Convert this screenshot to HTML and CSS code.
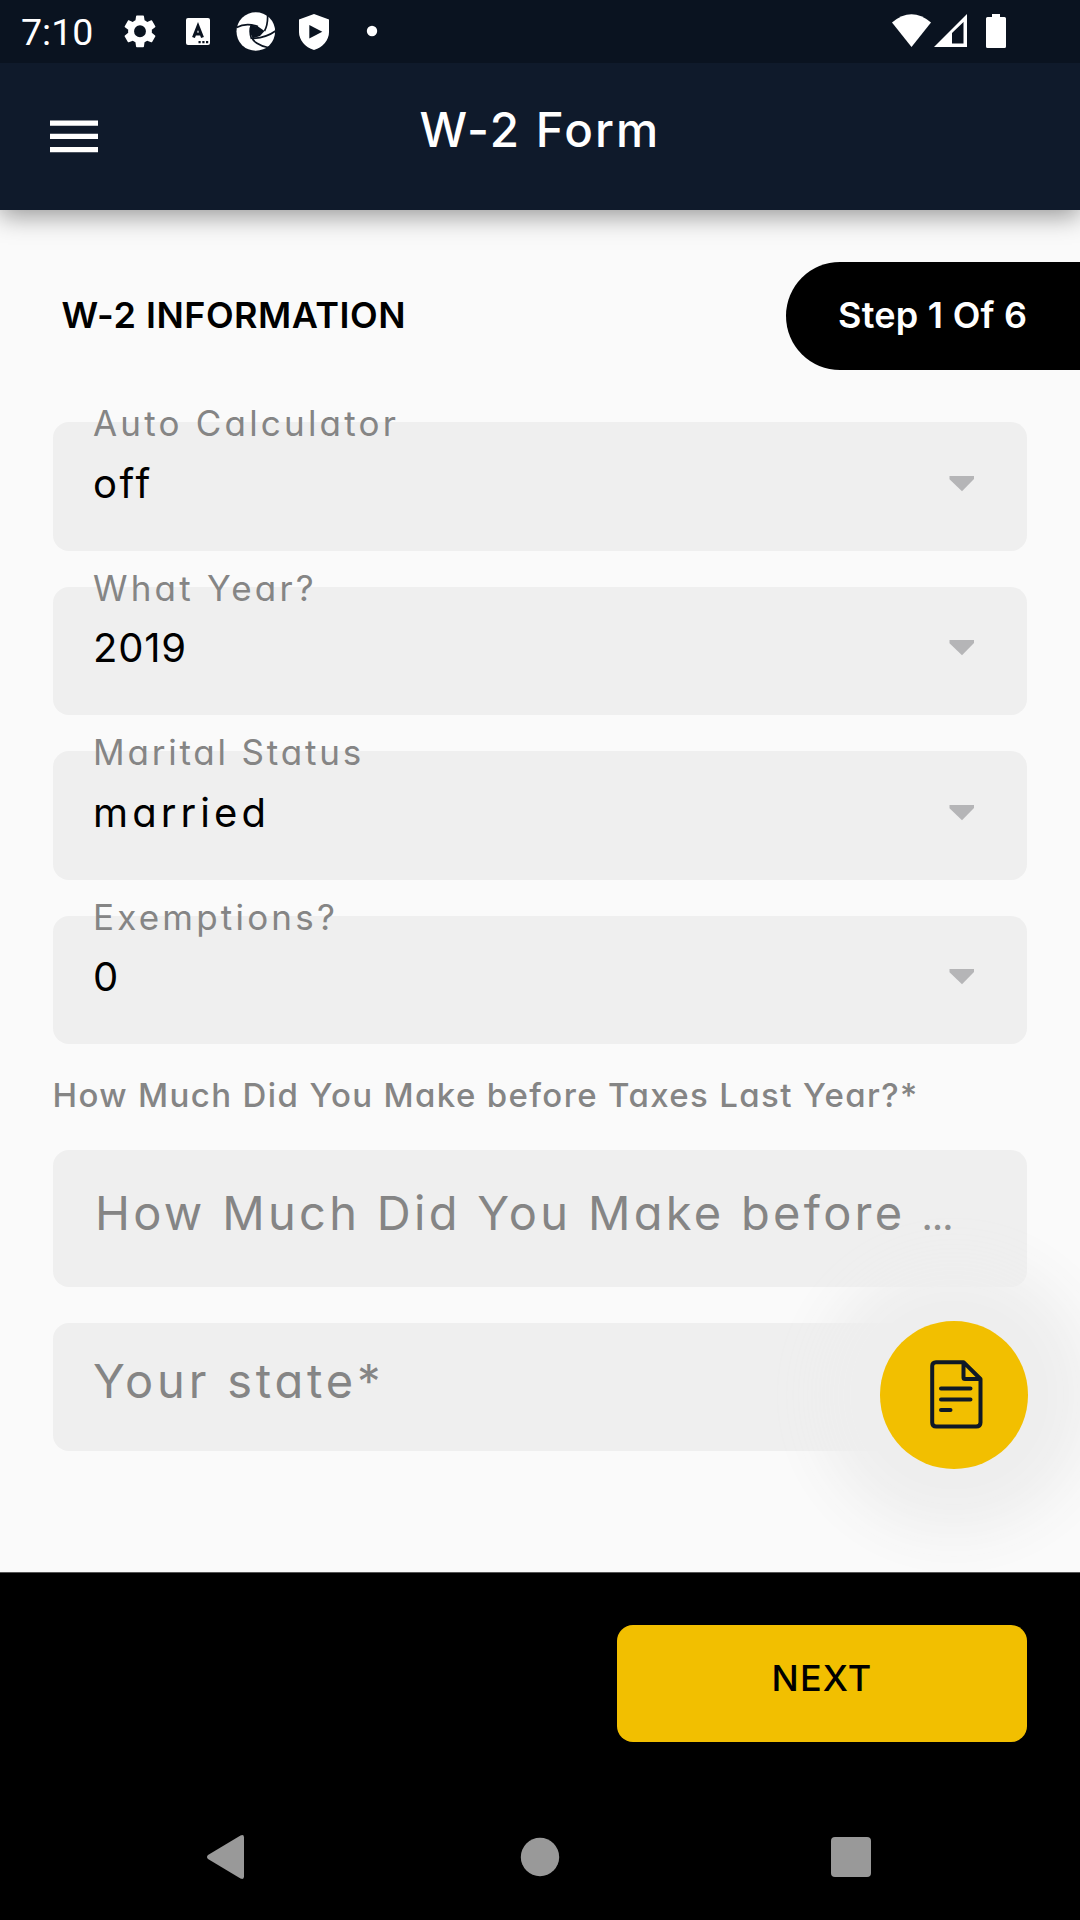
FILE: index.html
```html
<!DOCTYPE html>
<html lang="en">
<head>
<meta charset="utf-8">
<title>W-2 Form</title>
<link rel="stylesheet" href="styles.css">
</head>
<body>
<div class="screen">
  <div class="status">
    <span class="clock">7:10</span>
    <svg class="status-left" width="270" height="63" viewBox="110 0 270 63">
      <g transform="translate(120.2 11.5) scale(1.65)"><path fill="#fff" fill-rule="evenodd" d="M19.14 12.94c.04-.3.06-.61.06-.94 0-.32-.02-.64-.07-.94l2.03-1.58a.49.49 0 0 0 .12-.61l-1.92-3.32a.488.488 0 0 0-.59-.22l-2.39.96c-.5-.38-1.03-.7-1.62-.94l-.36-2.54a.484.484 0 0 0-.48-.41h-3.84c-.24 0-.43.17-.47.41l-.36 2.54c-.59.24-1.13.57-1.62.94l-2.39-.96c-.22-.08-.47 0-.59.22L2.74 8.87c-.12.21-.08.47.12.61l2.03 1.58c-.05.3-.09.63-.09.94s.02.64.07.94l-2.03 1.58a.49.49 0 0 0-.12.61l1.92 3.32c.12.22.37.29.59.22l2.39-.96c.5.38 1.03.7 1.62.94l.36 2.54c.05.24.24.41.48.41h3.84c.24 0 .44-.17.47-.41l.36-2.54c.59-.24 1.13-.56 1.62-.94l2.39.96c.22.08.47 0 .59-.22l1.92-3.32c.12-.22.07-.47-.12-.61l-2.01-1.58zM12 15.6A3.6 3.6 0 1 1 12 8.4a3.6 3.6 0 0 1 0 7.2z"/></g>
      <rect x="186" y="18" width="24" height="27" rx="2" fill="#fff"/>
      <path d="M193.500 37.500 198 26l4.500 11.500M195 34h6" fill="none" stroke="#0a1320" stroke-width="3"/>
      <path d="M198.500 41h2.200v2.200h-2.200zM202.300 41h2.200v2.200h-2.200zM206 41h2.200v2.200H206z" fill="#0a1320"/>
      <circle cx="255.800" cy="31.500" r="19.300" fill="#fff"/>
      <path d="M250.500 25.500 258 26.500 264.500 31 260 36 252.500 38.500 250 32z" fill="#0a1320"/>
      <path d="M236.500 27.500C242 24.500 249 23.500 258 26.500M267.500 14C268 21 267 26.500 264.500 31M275.500 31C270 35 262 38 252.500 38.500M268 47.500C259 46 253 41 252 38M251.500 39C249.500 33 250 28 251.500 25" fill="none" stroke="#0a1320" stroke-width="1.700"/>
      <path d="M314 14l15 5.500v12.500c0 8-6 15.500-15 18-9-2.500-15-10-15-18V19.500z" fill="#fff"/>
      <path d="M309.300 25v13.500l13-6.700z" fill="#0a1320"/>
      <circle cx="372" cy="31" r="5.200" fill="#fff"/>
    </svg>
    <svg class="status-right" width="120" height="63" viewBox="888 0 120 63">
      <path d="M892 22.500Q911.500 6 931 22.500L911.500 47z" fill="#fff"/>
      <path d="M934 47 967 14v33zM952 33v10.500h11.500V22z" fill="#fff" fill-rule="evenodd"/>
      <path d="M992 14h8v3h4.500q1.500 0 1.500 1.500v28q0 1.500-1.500 1.500h-17q-1.500 0-1.500-1.500v-28q0-1.500 1.500-1.500h4.500z" fill="#fff"/>
    </svg>
  </div>
  <header class="appbar">
    <svg class="menu" width="48" height="33" viewBox="0 0 48 33"><path d="M0 .500h48v5.200H0zM0 13.800h48V19H0zM0 27h48v5.200H0z" fill="#fff"/></svg>
    <h1 class="title">W-2 Form</h1>
  </header>
  <main class="content">
    <div class="heading">
      <h2 class="section">W-2 INFORMATION</h2>
      <div class="step">Step 1 Of 6</div>
    </div>
    <div class="fields">
      <div class="select"><div class="label">Auto Calculator</div><div class="row"><span class="value">off</span><svg class="arrow" width="26" height="16" viewBox="0 0 26 16"><path d="M.5 0H25v3L13 15.200.5 3.300z"/></svg></div></div>
      <div class="select"><div class="label">What Year?</div><div class="row"><span class="value digits">2019</span><svg class="arrow" width="26" height="16" viewBox="0 0 26 16"><path d="M.5 0H25v3L13 15.200.5 3.300z"/></svg></div></div>
      <div class="select"><div class="label tight">Marital Status</div><div class="row"><span class="value wide">married</span><svg class="arrow" width="26" height="16" viewBox="0 0 26 16"><path d="M.5 0H25v3L13 15.200.5 3.300z"/></svg></div></div>
      <div class="select"><div class="label">Exemptions?</div><div class="row"><span class="value digits">0</span><svg class="arrow" width="26" height="16" viewBox="0 0 26 16"><path d="M.5 0H25v3L13 15.200.5 3.300z"/></svg></div></div>
    </div>
    <p class="question">How Much Did You Make before Taxes Last Year?*</p>
    <div class="input income">How Much Did You Make before <span class="dots">…</span></div>
    <div class="input state">Your state*</div>
    <div class="fab">
      <svg width="53" height="69" viewBox="0 0 53 69" fill="none" stroke="#0f1926" stroke-width="4" stroke-linecap="round" stroke-linejoin="round"><path d="M33.500 2.200H6Q2.200 2.200 2.200 6v56.500q0 4 4 4h40q4.300 0 4.300-4V19zM33.500 2.200V17.500q0 1.500 1.500 1.500h15.500M11 28.500h29.500M11 39.500h29.500M11 50h9.500"/></svg>
    </div>
  </main>
  <footer class="footer"><button class="next">NEXT</button></footer>
  <nav class="nav">
    <svg width="1080" height="126" viewBox="0 0 1080 126" fill="#999"><path d="M208 61Q206 63 208 65L240.500 84.500Q244 86 244 82.500V43.500Q244 40 240.500 41.500z"/><circle cx="540" cy="63" r="19.200"/><rect x="831" y="43" width="40" height="40" rx="4"/></svg>
  </nav>
</div>
</body>
</html>
```
FILE: styles.css
```css
* { box-sizing: border-box; }
body { margin: 0; background: #fafafa; font-family: Inter, "Open Sans", sans-serif; font-feature-settings: "cv11"; }
.screen { width: 1080px; height: 1920px; display: flex; flex-direction: column; overflow: hidden; }
.status { height: 63px; background: #0a1320; display: flex; align-items: center; color: #fff; padding: 0 72px 0 21px; }
.clock { font: 400 37.5px/40px Roboto, sans-serif; width: 89px; padding-top: 1px; white-space: nowrap; }
.status-right { margin-left: auto; }
.appbar { height: 147px; background: #0f1a2b; display: grid; grid-template-columns: 98px 1fr 98px; align-items: center; position: relative; z-index: 1; box-shadow: 0 6px 24px rgba(0, 0, 0, .4); clip-path: inset(0 0 -40px 0); }
.menu { margin-left: 49.5px; }
.title { margin: 0; padding-bottom: 14px; text-align: center; color: #fff; font-size: 47.5px; line-height: 60px; font-weight: 500; letter-spacing: 2.1px; }
.content { position: relative; height: 1362px; padding: 52px 53px 0 52.5px; }
.heading { height: 108px; margin-right: -53px; display: flex; align-items: center; justify-content: space-between; }
.section { margin: 0; padding: 0 0 2px 9px; font-size: 36px; line-height: 40px; font-weight: 600; letter-spacing: .5px; }
.step { width: 294px; height: 108px; border-radius: 54px 0 0 54px; background: #000; color: #fff; font-size: 36px; line-height: 106px; font-weight: 600; letter-spacing: .25px; padding-left: 52px; white-space: nowrap; }
.fields { display: flex; flex-direction: column; gap: 35.7px; margin-top: 52.4px; }
.select { display: flex; flex-direction: column; height: 128.7px; border-radius: 16px; background: #efefef; padding: 0 52.5px 0 40.5px; }
.label { margin-top: -19px; height: 40px; line-height: 40px; font-size: 35px; letter-spacing: 3.2px; color: #858585; }
.label.tight { letter-spacing: 2.8px; }
.row { display: flex; align-items: center; justify-content: space-between; margin-top: 20.5px; height: 40px; }
.value { font-size: 40px; line-height: 40px; letter-spacing: 2.6px; color: #000; }
.value.digits { letter-spacing: .8px; }
.value.wide { letter-spacing: 4.1px; }
.arrow { fill: #b5b5b7; }
.question { margin: 31px 0 35px; line-height: 40px; font-size: 33px; font-weight: 500; letter-spacing: 1.37px; color: #858585; white-space: nowrap; }
.input { border-radius: 16px; background: #efefef; color: #858585; font-size: 47px; white-space: nowrap; }
.income { height: 137px; line-height: 125px; padding-left: 42.5px; letter-spacing: 3.3px; }
.dots { font-size: 31px; font-weight: 700; letter-spacing: 0; }
.state { height: 128.5px; line-height: 116.5px; margin-top: 35.3px; padding-left: 40.5px; letter-spacing: 3.8px; }
.fab { position: absolute; left: 880px; top: 1111px; width: 147.5px; height: 147.5px; border-radius: 50%; background: #f2bf00; box-shadow: 0 0 54px 64px #eee; display: flex; align-items: center; justify-content: center; padding-left: 6px; }
.footer { position: relative; height: 222px; background: #000; border-top: 1px solid #555; padding: 52px 53px 0 0; display: flex; justify-content: flex-end; }
.next { width: 410px; height: 117px; border: 0; border-radius: 16px; background: #f2bf00; color: #000; font: 500 36px/40px Inter, sans-serif; letter-spacing: 1.2px; padding: 0 0 11px; }
.nav { position: relative; height: 126px; background: #000; }
```
